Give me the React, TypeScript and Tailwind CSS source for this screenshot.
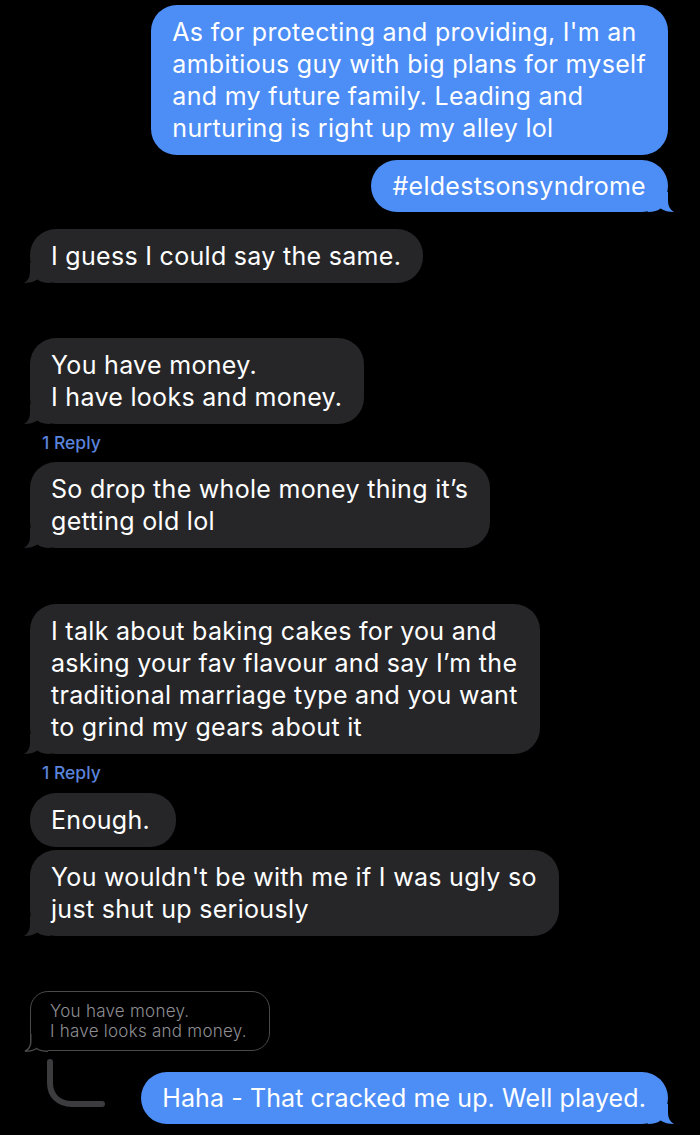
import React from 'react'

const font = { fontFamily: 'Inter, "Noto Sans", sans-serif' }

function TailLeft({ color }: { color: string }) {
  return (
    <svg className="absolute left-[-6px] bottom-0" width="26" height="20" viewBox="0 0 26 20">
      <path d="M6 0 L6 9 C6 14 4 17.5 0 20 C5 20 10 19 13.5 16.5 C16 18.5 20 20 26 20 L26 0 Z" fill={color} />
    </svg>
  )
}

function TailRight({ color }: { color: string }) {
  return (
    <svg className="absolute right-[-6px] bottom-0" width="26" height="20" viewBox="0 0 26 20">
      <path d="M20 0 L20 9 C20 14 22 17.5 26 20 C21 20 16 19 12.5 16.5 C10 18.5 6 20 0 20 L0 0 Z" fill={color} />
    </svg>
  )
}

type BubbleProps = { children: React.ReactNode; tail?: boolean; pad?: string; className?: string }

function Them({ children, tail = true, pad = 'py-[11px]', className = '' }: BubbleProps) {
  return (
    <div className={`relative self-start bg-[#262629] text-white rounded-[26px] pl-[21px] pr-[22px] ${pad} text-[25px] leading-[32px] tracking-[0.3px] whitespace-nowrap ${className}`}>
      {children}
      {tail && <TailLeft color="#262629" />}
    </div>
  )
}

function Me({ children, tail = true, pad = 'py-[11px]', className = '' }: BubbleProps) {
  return (
    <div className={`relative self-end bg-[#4c8df6] text-white rounded-[26px] pl-[21px] pr-[22px] ${pad} text-[25px] leading-[32px] tracking-[0.3px] whitespace-nowrap ${className}`}>
      {children}
      {tail && <TailRight color="#4c8df6" />}
    </div>
  )
}

function ReplyLabel({ className = '' }: { className?: string }) {
  return (
    <div className={`pl-[12px] h-[22px] leading-[22px] text-[17.5px] font-medium text-[#5a84dc] ${className}`}>1 Reply</div>
  )
}

export default function App() {
  return (
    <div className="min-h-[1135px] bg-black pt-[5px] pl-[30px] pr-[32px] flex flex-col" style={font}>
      <Me tail={false}>
        As for protecting and providing, I'm an<br />
        ambitious guy with big plans for myself<br />
        and my future family. Leading and<br />
        nurturing is right up my alley lol
      </Me>
      <Me className="mt-[5px]" pad="py-[10px]">#eldestsonsyndrome</Me>

      <Them className="mt-[17px]">I guess I could say the same.</Them>

      <Them className="mt-[55px]">
        You have money.<br />
        I have looks and money.
      </Them>
      <ReplyLabel className="mt-[8px] mb-[8px]" />
      <Them>
        So drop the whole money thing it’s<br />
        getting old lol
      </Them>

      <Them className="mt-[56px]">
        I talk about baking cakes for you and<br />
        asking your fav flavour and say I’m the<br />
        traditional marriage type and you want<br />
        to grind my gears about it
      </Them>
      <ReplyLabel className="mt-[8px] mb-[9px]" />
      <Them tail={false} className="pr-[26px]">Enough.</Them>
      <Them className="mt-[3px]">
        You wouldn't be with me if I was ugly so<br />
        just shut up seriously
      </Them>

      {/* quoted message */}
      <div className="relative self-start mt-[55px] border-[1.5px] border-[#4a4a4d] rounded-[18px] pl-[19px] pr-[22px] py-[9px] text-[17px] leading-[20px] font-light tracking-[0.25px] text-[#8e8e93] whitespace-nowrap">
        You have money.<br />
        I have looks and money.
        <svg className="absolute left-[-7.5px] bottom-[-1.5px]" width="24" height="18" viewBox="0 0 24 18">
          <path d="M6.75 0 L6.75 8 C6.75 12.5 4.5 15.5 1 17.25 C5 17.25 9.5 16.5 12.5 14.5 C15 16.2 19 17.25 24 17.25 L24 0 Z" fill="#000" />
          <path d="M6.75 0 L6.75 8 C6.75 12.5 4.5 15.5 1 17.25 C5 17.25 9.5 16.5 12.5 14.5 C15 16.2 19 17.25 24 17.25" fill="none" stroke="#4a4a4d" strokeWidth="1.5" />
        </svg>
      </div>

      <div className="flex items-start mt-[8px]">
        <svg className="ml-[16px] shrink-0" width="60" height="50" viewBox="0 0 60 50">
          <path d="M4 3 L4 24 C4 36 12 45 26 45 L56 45" fill="none" stroke="#3c3c3f" strokeWidth="6" strokeLinecap="round" />
        </svg>
        <Me className="ml-auto mt-[13px]" pad="py-[10px]">
          <span className="tracking-[0.1px]">Haha - That cracked me up. Well played.</span>
        </Me>
      </div>
    </div>
  )
}
